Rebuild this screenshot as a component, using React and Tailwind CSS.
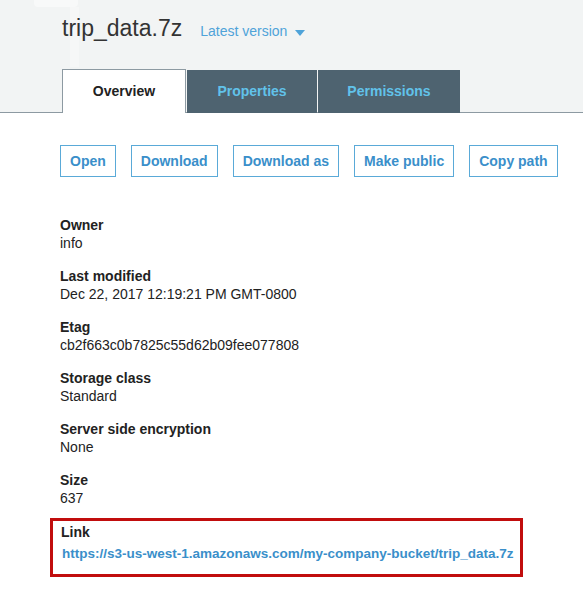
import React from 'react';

const FONT = { fontFamily: '"Liberation Sans", Arial, sans-serif' };

const actions = ['Open', 'Download', 'Download as', 'Make public', 'Copy path'];

const details = [
  { label: 'Owner', value: 'info' },
  { label: 'Last modified', value: 'Dec 22, 2017 12:19:21 PM GMT-0800' },
  { label: 'Etag', value: 'cb2f663c0b7825c55d62b09fee077808' },
  { label: 'Storage class', value: 'Standard' },
  { label: 'Server side encryption', value: 'None' },
  { label: 'Size', value: '637' },
];

function Detail({ label, value }) {
  return (
    <div className="flex flex-col">
      <div className="text-[14px] leading-[18px] font-bold text-[#222]">{label}</div>
      <div className="text-[14px] leading-[18px] text-[#222]">{value}</div>
    </div>
  );
}

export default function App() {
  return (
    <div className="w-[583px] h-[611px] bg-white overflow-hidden" style={FONT}>
      {/* Header */}
      <div className="relative bg-[#f2f4f4] h-[113px] border-b border-[#8d9aa2]">
        <div className="absolute left-[34px] top-0 w-[44px] h-[7px] rounded-b-[4px] bg-[#f8f9f9]" />
        <div className="absolute left-[70px] top-[7px] w-[9px] h-[60px] bg-[#f6f7f7]" />
        <div className="relative flex items-baseline gap-[18px] pl-[62px] pt-[13px]">
          <h1 className="text-[23px] leading-[30px] text-[#333]">trip_data.7z</h1>
          <button className="flex items-center gap-[8px] text-[14px] text-[#4fa3d9]">
            Latest version
            <svg width="10" height="6" viewBox="0 0 10 6" className="mt-[2px]">
              <path d="M0 0h10L5 6z" fill="#4fa3d9" />
            </svg>
          </button>
        </div>
        <div className="absolute left-[62px] bottom-[-1px] flex">
          <div className="w-[124px] h-[44px] bg-white border border-b-0 border-[#8d9aa2] flex items-center justify-center text-[14px] font-bold text-[#222]">
            Overview
          </div>
          <div className="w-[130px] h-[43px] mt-[1px] ml-[1px] bg-[#4e6370] flex items-center justify-center text-[14px] font-bold text-[#61c2ea]">
            Properties
          </div>
          <div className="w-[142px] h-[43px] mt-[1px] ml-[1px] bg-[#4e6370] flex items-center justify-center text-[14px] font-bold text-[#61c2ea]">
            Permissions
          </div>
        </div>
      </div>

      {/* Actions */}
      <div className="flex gap-[15px] pl-[60px] pt-[32px]">
        {actions.map((a) => (
          <button
            key={a}
            className="h-[32px] px-[9px] border border-[#5aaad8] bg-white text-[14px] font-bold text-[#3a8fca]"
          >
            {a}
          </button>
        ))}
      </div>

      {/* Details */}
      <div className="flex flex-col gap-[15px] pl-[60px] pt-[39px]">
        {details.map((d) => (
          <Detail key={d.label} {...d} />
        ))}
      </div>

      <div className="ml-[50px] mt-[11px] w-[473px] h-[59px] border-[3px] border-[#c10d0d] pl-[8px] pt-[2px]">
        <div className="text-[14px] leading-[18px] font-bold text-[#222]">Link</div>
        <a
          href="#"
          className="block pl-[1px] mt-[4px] text-[13.5px] leading-[18px] font-bold text-[#3a8fca]"
        >
          https://s3-us-west-1.amazonaws.com/my-company-bucket/trip_data.7z
        </a>
      </div>
    </div>
  );
}
